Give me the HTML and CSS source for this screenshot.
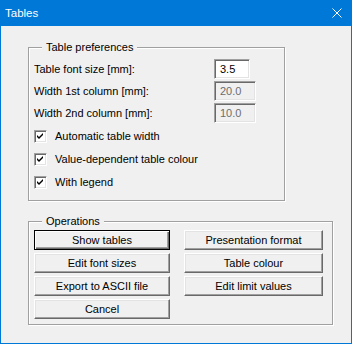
FILE: index.html
```html
<!DOCTYPE html>
<html lang="en">

<head>
    <meta charset="UTF-8">
    <title>Tables</title>
    <link rel="stylesheet" href="styles.css">
</head>

<body>
    <div class="window">
        <div class="titlebar">
            <span class="title">Tables</span>
            <svg class="close" width="10" height="10" viewBox="0 0 10 10">
                <path d="M0.5 0.5 L9.5 9.5 M9.5 0.5 L0.5 9.5" stroke="#fff" stroke-width="1" fill="none" />
            </svg>
        </div>
        <div class="content">
            <!-- Table preferences -->
            <fieldset class="group prefs">
                <legend>Table preferences</legend>
                <div class="field-row">
                    <label>Table font size [mm]:</label>
                    <input class="edit narrow" type="text" value="3.5">
                </div>
                <div class="field-row">
                    <label>Width 1st column [mm]:</label>
                    <input class="edit" type="text" value="20.0" disabled>
                </div>
                <div class="field-row">
                    <label>Width 2nd column [mm]:</label>
                    <input class="edit" type="text" value="10.0" disabled>
                </div>
                <div class="checks">
                    <div class="check-row"><span class="checkbox"><svg width="9" height="9" viewBox="0 0 9 9"><polygon points="1,3 3,5 7,1 7,3 3,7 1,5" fill="#000" /></svg></span>Automatic table width</div>
                    <div class="check-row"><span class="checkbox"><svg width="9" height="9" viewBox="0 0 9 9"><polygon points="1,3 3,5 7,1 7,3 3,7 1,5" fill="#000" /></svg></span>Value-dependent table colour</div>
                    <div class="check-row"><span class="checkbox"><svg width="9" height="9" viewBox="0 0 9 9"><polygon points="1,3 3,5 7,1 7,3 3,7 1,5" fill="#000" /></svg></span>With legend</div>
                </div>
            </fieldset>

            <!-- Operations -->
            <fieldset class="group ops">
                <legend>Operations</legend>
                <div class="button-grid">
                    <button class="btn default">Show tables</button>
                    <button class="btn">Presentation format</button>
                    <button class="btn">Edit font sizes</button>
                    <button class="btn">Table colour</button>
                    <button class="btn">Export to ASCII file</button>
                    <button class="btn">Edit limit values</button>
                    <button class="btn">Cancel</button>
                </div>
            </fieldset>
        </div>
    </div>
</body>

</html>
```

FILE: styles.css
```css
body {
    margin: 0;
    font-family: "Liberation Sans", Arial, sans-serif;
    font-size: 11px;
    color: #000;
}

.window {
    width: 352px;
    height: 344px;
    box-sizing: border-box;
    border: 1px solid #0078d7;
    border-top: none;
    background-color: #f0f0f0;
}

.titlebar {
    height: 26px;
    background-color: #0078d7;
    color: #fff;
    display: flex;
    align-items: center;
    justify-content: space-between;
    padding: 0 9px 0 4px;
    font-size: 11.5px;
}

.close {
    display: block;
}

.content {
    padding: 15px 0 0 27px;
}

.group {
    margin: 0;
    padding: 5px 5px 6px;
    border: 1px solid #a0a0a0;
    box-shadow: inset 1px 1px 0 #fff, 1px 1px 0 #fff;
    box-sizing: border-box;
}

.group legend {
    margin-left: 8px;
    padding: 0 4px;
    line-height: 13px;
    background-color: #f0f0f0;
}

.prefs {
    width: 257px;
    padding-bottom: 5px;
}

.ops {
    width: 305px;
    margin-top: 14px;
    padding-top: 2px;
    padding-bottom: 5px;
}

.field-row {
    display: flex;
    align-items: center;
    height: 20px;
    margin-bottom: 2px;
}

.field-row label {
    width: 180px;
}

.edit {
    width: 42px;
    height: 20px;
    box-sizing: border-box;
    margin: 0;
    padding: 0 0 0 5px;
    font-family: inherit;
    font-size: 11px;
    color: #000;
    background-color: #fff;
    border: 1px solid;
    border-color: #a0a0a0 #fff #fff #a0a0a0;
    box-shadow: inset 1px 1px 0 #696969, inset -1px -1px 0 #e3e3e3;
    outline: none;
}

.edit.narrow {
    width: 36px;
}

.edit:disabled {
    background-color: #f0f0f0;
    color: #6d6d6d;
}

.checks {
    margin-top: 3px;
}

.check-row {
    display: flex;
    align-items: center;
    height: 20px;
    margin-bottom: 3px;
}

.checkbox {
    width: 13px;
    height: 13px;
    box-sizing: border-box;
    margin-right: 8px;
    display: flex;
    align-items: center;
    justify-content: center;
    background-color: #fff;
    border: 1px solid;
    border-color: #a0a0a0 #fff #fff #a0a0a0;
    box-shadow: inset 1px 1px 0 #696969, inset -1px -1px 0 #e3e3e3;
}

.button-grid {
    display: grid;
    grid-template-columns: 136px 139px;
    column-gap: 14px;
    row-gap: 3px;
}

.btn {
    height: 20px;
    margin: 0;
    padding: 0;
    font-family: inherit;
    font-size: 11px;
    color: #000;
    background-color: #f0f0f0;
    border: 1px solid;
    border-color: #fff #696969 #696969 #fff;
    box-shadow: inset -1px -1px 0 #a0a0a0, inset 1px 1px 0 #e3e3e3;
}

.btn.default {
    border-color: #000;
    box-shadow: inset 1px 1px 0 #fff, inset -1px -1px 0 #696969, inset -2px -2px 0 #a0a0a0;
}
```
